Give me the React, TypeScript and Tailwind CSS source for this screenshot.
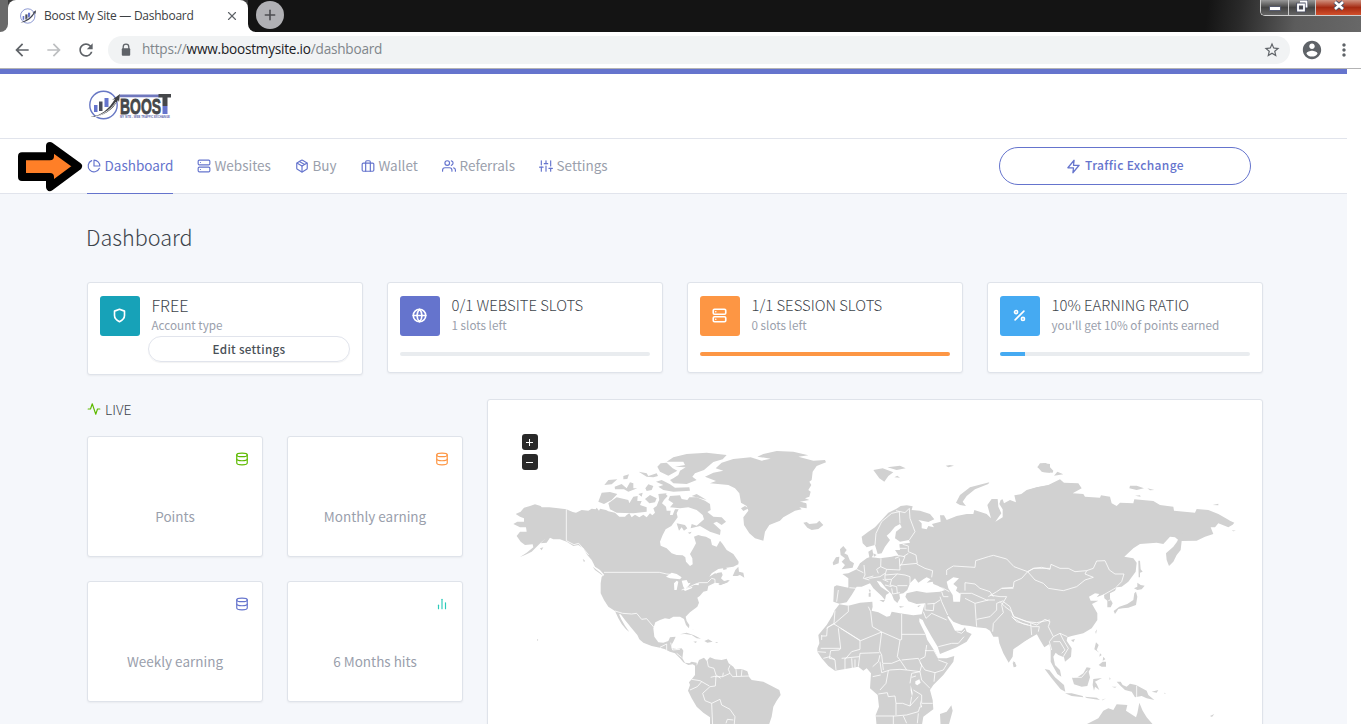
import React from "react";
import {
  FiPieChart, FiServer, FiPackage, FiBriefcase, FiUsers, FiSliders, FiZap, FiShield,
  FiGlobe, FiPercent, FiActivity, FiDatabase, FiBarChart2, FiX, FiPlus,
} from "react-icons/fi";
import { MdArrowBack, MdArrowForward, MdRefresh, MdStarBorder, MdMoreVert } from "react-icons/md";

const sans = "font-['Noto_Sans_CJK_SC',sans-serif]";
const chromeFont = "font-['Open_Sans',sans-serif]";

function Emblem({ className }: { className: string }) {
  return (
    <svg className={className} viewBox="0 0 30 30" fill="none">
      <circle cx="14.5" cy="15" r="13.5" stroke="#6878c4" strokeWidth="1.4" />
      <path d="M5 15h3v8H5zM15 9h4v9h-4z" fill="#6574cd" />
      <path d="M10 12h4v10h-4z" fill="#4a4d5c" />
      <path d="M1 27C14 23 20 17 26 8l-3 1 7-5-1 8-1-3C22 20 13 27 1 27z" fill="#3f4350" />
      <path d="M4 23C14 22 20 16 24 10" stroke="#fff" strokeWidth="0.8" />
    </svg>
  );
}

function BrowserChrome() {
  return (
    <div className={`${chromeFont} shrink-0`}>
      <div className="flex h-8 bg-white">
        <div className="h-8 w-2 rounded-br-lg bg-[#6a6a6a]" />
        <div className="flex w-60 bg-[#3a3a3a]">
          <div className="flex h-8 w-60 items-center rounded-t-lg bg-white pl-3 pr-[9px] text-[12px] text-[#3c4043]">
            <Emblem className="h-4 w-4" />
            <span className="ml-2 whitespace-nowrap pb-px tracking-[-0.26px]">Boost My Site — Dashboard</span>
            <FiX className="ml-auto h-3.5 w-3.5 text-[#5f6368]" />
          </div>
        </div>
        <div className="flex flex-1 rounded-bl-lg bg-[linear-gradient(97deg,#141414_86%,#2a2a2a_89%,#5c5c5c_94%,#686868_100%)]">
          <div className="ml-2 mt-px flex h-7 w-7 items-center justify-center rounded-full bg-[#b0b0b4]">
            <FiPlus className="h-4 w-4 text-[#4c4c50]" strokeWidth={2.4} />
          </div>
          <div className="ml-auto flex h-4 overflow-hidden rounded-bl-[5px] border-b border-l border-[#d0d0d0]">
            <div className="flex w-7 items-end justify-center border-r border-[#c8c8c8] bg-[linear-gradient(#999,#444_50%,#666)] pb-1">
              <div className="h-[5px] w-3 border border-[#555a6e] bg-white" />
            </div>
            <div className="flex w-[27px] justify-center border-r border-[#c8c8c8] bg-[linear-gradient(#999,#444_50%,#666)]">
              <svg width="12" height="13" viewBox="0 0 12 13" fill="none">
                <path d="M4 1.5h6.5v6M2 4.5h6v6H2z" stroke="#4b4f65" strokeWidth="3.5" />
                <path d="M4 1.5h6.5v6M2 4.5h6v6H2z" stroke="#fff" strokeWidth="1.8" />
              </svg>
            </div>
            <div className="flex w-[45px] justify-center bg-[linear-gradient(#d0917f,#a52a12_50%,#d2502c)]">
              <svg width="12" height="12" viewBox="0 0 12 12" fill="none">
                <path d="M2 2l8 7M10 2l-8 7" stroke="#4b4f65" strokeWidth="4.5" />
                <path d="M2 2l8 7M10 2l-8 7" stroke="#fff" strokeWidth="2.6" />
              </svg>
            </div>
          </div>
        </div>
      </div>
      <div className="flex h-[37px] items-center border-b border-[#b3b3b4] bg-white pl-3">
        <MdArrowBack className="h-5 w-5 text-[#5f6368]" />
        <MdArrowForward className="ml-3 h-5 w-5 text-[#bdbfc1]" />
        <MdRefresh className="ml-3 h-5 w-5 text-[#5f6368]" />
        <div className="ml-3 flex h-7 w-[1182px] items-center rounded-full bg-[#f1f3f4] pl-2.5 pr-[9px]">
          <svg className="h-4 w-4" viewBox="0 0 16 16">
            <path d="M5.2 7V5a2.8 2.8 0 0 1 5.6 0v2" fill="none" stroke="#5f6368" strokeWidth="1.3" />
            <path d="M4.8 6.3h6.4a1 1 0 0 1 1 1v5.4a1 1 0 0 1-1 1H4.8a1 1 0 0 1-1-1V7.3a1 1 0 0 1 1-1z" fill="#5f6368" />
          </svg>
          <span className="ml-2 pb-px text-[13.6px] tracking-[-0.22px] text-[#80868b]">
            https://<span className="text-[#202124]">www.boostmysite.io</span>/dashboard
          </span>
          <MdStarBorder className="ml-auto h-[18px] w-[18px] text-[#5f6368]" />
        </div>
        <svg className="ml-[11px] h-[22px] w-[22px]" viewBox="0 0 24 24" fill="#5f6368">
          <path d="M12 2C6.48 2 2 6.48 2 12s4.48 10 10 10 10-4.48 10-10S17.52 2 12 2zm0 3c1.66 0 3 1.34 3 3s-1.34 3-3 3-3-1.34-3-3 1.34-3 3-3zm0 14.2c-2.5 0-4.71-1.28-6-3.22.03-1.99 4-3.08 6-3.08 1.99 0 5.97 1.09 6 3.08-1.29 1.94-3.5 3.22-6 3.22z" />
        </svg>
        <MdMoreVert className="ml-[11px] h-5 w-5 text-[#5f6368]" />
      </div>
    </div>
  );
}

function Logo() {
  return (
    <svg className="block overflow-visible" width="100" height="36" viewBox="0 0 100 36">
      <circle cx="14.5" cy="15" r="13.7" stroke="#6878c4" strokeWidth="1.4" fill="none" />
      <path d="M5 15h3.5v7H5zM15.5 8h4v9h-4z" fill="#6574cd" />
      <path d="M10 11.5h3.5V21H10z" fill="#4a4d5c" />
      <path d="M31 4.5h39v2.8H31z" fill="#7078bd" />
      <path d="M1 27C12 26 20 19 26 9l-3 1 8-6-1 8-1-2C24 20 14 27 1 27z" fill="#3f4146" />
      <path d="M6 27C16 24 23 18 27 12" stroke="#fff" strokeWidth=".8" fill="none" />
      <text x="31" y="24" textLength="41" lengthAdjust="spacingAndGlyphs" className="fill-[#45474a] font-['Liberation_Sans',sans-serif] text-[22px] font-bold" stroke="#45474a" strokeWidth=".8">BOOS</text>
      <path d="M69.5 4H82v3.6h-3.5V16h-5V7.600h-4z" fill="#45474a" />
      <path d="M73.500 16h5v8h-5z" fill="#6574cd" />
      <text x="31" y="28" textLength="50" lengthAdjust="spacingAndGlyphs" className="fill-[#5f6aae] font-['Liberation_Sans',sans-serif] text-[3.8px] font-bold">MY SITE - WEB TRAFFIC EXCHANGE</text>
    </svg>
  );
}

const nav = [
  { label: "Dashboard", icon: FiPieChart, box: "w-[86px]", active: true },
  { label: "Websites", icon: FiServer, box: "w-[74px]", active: false },
  { label: "Buy", icon: FiPackage, box: "w-[42px]", active: false },
  { label: "Wallet", icon: FiBriefcase, box: "w-[57px]", active: false },
  { label: "Referrals", icon: FiUsers, box: "w-[73px]", active: false },
  { label: "Settings", icon: FiSliders, box: "w-[70px]", active: false },
];

function NavBar() {
  return (
    <nav className="flex h-[55px] border-b border-[#e1e4ec] bg-white pl-[87px] pr-24">
      <div className="flex gap-6">
        {nav.map(({ label, icon: Icon, box, active }) => (
          <div
            key={label}
            className={`flex ${box} h-[55px] items-center gap-[3.5px] whitespace-nowrap border-b text-[13.5px] ${active ? "border-[#6574cd] text-[#6574cd]" : "border-transparent text-[#9aa0ac]"}`}
          >
            <Icon className="h-3.5 w-3.5 shrink-0 text-[#6574cd]" />
            <span className="pb-0.5 leading-5">{label}</span>
          </div>
        ))}
      </div>
      <div className="ml-auto mt-2 flex h-[38px] w-[252px] items-center justify-center gap-1 rounded-full border border-[#6574cd] text-[12px] font-medium tracking-[0.35px] text-[#6574cd]">
        <FiZap className="h-[15px] w-[15px]" />
        <span className="pb-0.5 leading-5">Traffic Exchange</span>
      </div>
    </nav>
  );
}

const card = "rounded-[3px] border border-[#dfe3ea] bg-white shadow-[0_1px_2px_0_rgba(0,0,0,0.05)]";

const stats = [
  { title: "FREE", sub: "Account type", icon: FiShield, tone: "bg-[#17a2b8]", size: "text-[16.2px]", bar: null, fill: 0 },
  { title: "0/1 WEBSITE SLOTS", sub: "1 slots left", icon: FiGlobe, tone: "bg-[#6574cd]", size: "text-[14.85px]", bar: "bg-[#6574cd]", fill: 0 },
  { title: "1/1 SESSION SLOTS", sub: "0 slots left", icon: FiServer, tone: "bg-[#fd9644]", size: "text-[14.85px]", bar: "bg-[#fd9644]", fill: 100 },
  { title: "10% EARNING RATIO", sub: "you'll get 10% of points earned", icon: FiPercent, tone: "bg-[#45aaf2]", size: "text-[14.85px]", bar: "bg-[#45aaf2]", fill: 10 },
];

function StatCards() {
  return (
    <div className="grid h-[93px] grid-cols-4 items-start gap-6">
      {stats.map(({ title, sub, icon: Icon, tone, size, bar, fill }) => (
        <div key={title} className={`${card} px-3 pt-[13px] ${bar ? "h-[91px]" : "h-[93px]"}`}>
          <div className="flex h-10">
            <div className={`flex h-10 w-10 shrink-0 items-center justify-center rounded-[3px] pb-0.5 pr-px ${tone}`}>
              <Icon className="h-[15px] w-[15px] text-white" strokeWidth={2.6} />
            </div>
            <div className="-mt-px ml-[11.5px] whitespace-nowrap">
              <div className={`h-5 font-light leading-5 text-[#3d444b] ${size}`}>{title}</div>
              <div className="h-5 text-[11.7px] leading-5 text-[#9aa0ac]">{sub}</div>
            </div>
          </div>
          {bar ? (
            <div className="mt-4 h-1 overflow-hidden rounded-[3px] bg-[#e9ecef]">
              <div className={`h-full ${bar}`} style={{ width: `${fill}%` }} />
            </div>
          ) : (
            <div className="ml-12 flex h-[26px] w-[202px] items-center justify-center rounded-full border border-[#e1e4ec] pb-px text-[11.7px] font-medium leading-5 tracking-[0.3px] text-[#495057] shadow-[0_1px_1px_rgba(0,0,0,0.05)]">
              Edit settings
            </div>
          )}
        </div>
      ))}
    </div>
  );
}

const live = [
  { label: "Points", icon: FiDatabase, tone: "text-[#5eba00]" },
  { label: "Monthly earning", icon: FiDatabase, tone: "text-[#fd9644]" },
  { label: "Weekly earning", icon: FiDatabase, tone: "text-[#6574cd]" },
  { label: "6 Months hits", icon: FiBarChart2, tone: "text-[#2bcbba]" },
];

function LivePanel() {
  return (
    <section className="w-[376px]">
      <div className="flex h-[22px] items-center gap-1 pb-0.5 text-[13.8px] font-light text-[#3d444b]">
        <FiActivity className="h-3.5 w-3.5 text-[#5eba00]" />
        <span className="leading-5">LIVE</span>
      </div>
      <div className="mt-[15px] grid grid-cols-2 gap-6">
        {live.map(({ label, icon: Icon, tone }) => (
          <div key={label} className={`${card} flex h-[121px] flex-col items-center px-[13px] pt-[15px]`}>
            <Icon className={`h-3.5 w-3.5 self-end ${tone}`} />
            <div className="mt-10 text-[13.5px] leading-5 text-[#9aa0ac]">{label}</div>
          </div>
        ))}
      </div>
    </section>
  );
}

/* Land outlines, one list for each section of the map. */
const northAmerica = [
  "M47 282 62 275 72 263 90 258 105 253 122 258 125 262 148 262 175 265 199 268 218 276 228 278 245 270 265 272 275 266 287 268 290 263 297 272 300 266 318 270 325 274 345 278 358 290 375 290 380 285 388 280 395 292 405 284 418 292 430 284 440 292 450 280 457 286 465 278 460 265 470 258 475 245 482 232 497 222 503 228 492 240 486 250 498 260 500 272 512 272 510 285 518 285 525 268 536 268 530 280 533 292 525 303 514 318 497 328 488 345 480 365 482 377 500 385 515 400 530 405 548 406 556 412 558 425 570 438 578 433 577 415 570 402 580 385 588 370 582 350 595 345 605 348 618 350 632 358 636 375 650 380 660 362 668 372 680 390 700 402 716 425 715 433 700 440 680 443 655 447 635 460 628 470 645 460 665 457 668 465 663 475 672 483 690 480 680 488 660 495 658 490 645 488 625 498 622 512 610 515 600 527 592 533 597 548 592 560 570 577 557 590 560 603 568 615 567 625 558 615 552 597 540 590 520 590 508 597 495 595 480 600 466 607 460 625 463 650 475 667 490 668 505 663 510 652 527 650 520 665 516 672 515 685 530 687 545 685 550 692 547 715 555 728 568 730 575 725 590 728 590 740 578 733 565 735 550 727 540 715 525 700 510 695 495 688 480 683 455 678 430 668 418 658 412 645 395 625 375 600 362 583 357 583 365 600 375 617 388 636 378 628 365 612 355 595 345 573 325 560 312 540 302 520 302 490 305 470 313 465 300 450 285 440 280 430 275 420 262 405 250 385 235 375 220 378 200 365 180 358 160 358 150 353 140 368 122 370 137 355 122 368 110 380 95 395 75 405 60 411 80 398 100 382 98 373 75 375 62 365 50 348 60 335 80 335 78 322 60 322 40 312 52 305 72 305 72 295 60 290z",
  "M500 125 520 112 560 102 620 98 680 105 668 118 640 126 612 150 585 160 577 170 590 180 560 192 520 190 510 180 520 175 535 165 540 152 557 142 525 140 555 135 550 125z",
  "M472 140 482 130 500 128 518 145 532 152 505 167 480 155z",
  "M510 228 540 226 545 237 562 240 568 232 590 232 615 242 630 252 632 270 622 276 640 290 665 292 678 305 665 315 650 305 640 310 662 330 660 345 630 335 600 318 572 325 575 312 590 317 612 298 608 285 590 270 565 262 540 265 510 262 520 250 505 240z",
  "M590 222 620 240 575 228zM325 250 350 232 385 240 388 250 400 230 413 228 412 243 425 243 420 255 440 262 440 275 400 280 350 278 330 268z",
  "M295 245 305 218 330 216 352 222 335 240 312 252zM313 195 325 180 352 178 335 193zM370 168 387 163 382 177 370 178zM344 200 365 192 380 205 390 187 400 190 400 205 412 205 385 215 372 208 345 208z",
  "M416 155 440 160 445 168 470 160 474 168 460 172 440 170zM436 205 445 193 460 198 455 210 440 213zM468 185 485 180 510 193 525 203 568 202 570 212 520 215 490 210 475 200 490 195zM435 237 450 225 470 235 465 247 448 250zM475 222 500 220 490 235 478 240zM415 222 428 218 425 230zM530 310 555 315 562 325 552 332 545 322 537 332zM563 338 575 335 570 342z",
  "M698 468 706 450 715 440 717 455 730 458 733 473 720 465 712 468zM668 435 682 447 670 450zM655 492 685 480 685 486 660 496zM248 416 255 422 252 427zM278 440 303 460 310 468 285 450zM112 656 115 660 111 663zM120 385 130 382 125 391z",
  "M540 643 560 638 582 646 603 656 590 655 575 645 555 642zM580 665 590 664 588 669zM613 663 625 658 638 665 622 668zM645 666 655 667 650 669zM575 626 585 630 578 628z",
];
const southAmericaGreenland = [
  "M45 700 50 708 57 690 72 683 80 692 90 682 105 688 125 690 140 686 146 700 160 710 165 718 185 717 202 724 208 742 215 750 250 755 275 768 298 780 302 795 290 812 280 830 275 860 265 890 90 890 90 862 70 848 50 830 35 805 24 782 30 765 27 757 35 748 45 735z",
  "M75 140 100 128 130 122 107 115 125 98 160 87 212 82 245 92 272 86 232 80 250 72 290 63 340 65 385 76 355 80 400 92 435 90 438 97 410 108 398 125 395 150 388 155 394 165 385 180 392 185 388 200 375 205 388 210 360 215 380 223 380 235 358 232 365 238 345 242 310 262 300 272 268 285 255 305 250 332 225 325 208 310 192 285 190 262 205 242 200 228 183 218 178 190 165 175 145 165 90 160 108 153z",
  "M183 235 195 228 206 235 190 243zM360 215 380 220 370 230zM370 278 380 276 388 282 410 280 418 272 430 285 415 297 395 300 382 293z",
  "M580 120 608 115 640 127 625 138 613 155 598 145zM622 112 660 107 677 115 650 120zM643 142 652 137 660 143z",
];
const eurasiaAfrica = [
  "M155 290 175 275 195 262 215 240 235 218 258 207 272 198 290 196 308 199 305 210 330 212 360 222 373 238 355 246 325 240 335 250 335 265 350 268 355 258 372 262 366 252 392 245 390 226 402 226 410 240 440 228 470 222 490 222 493 210 530 222 543 235 532 195 545 177 563 177 565 200 574 220 556 245 578 232 578 208 568 192 572 180 578 178 582 190 600 180 618 187 613 166 650 160 655 150 682 142 720 135 720 560 650 600 610 628 608 650 596 668 580 640 568 610 565 590 550 590 540 572 528 565 500 562 480 558 455 555 430 545 415 528 412 530 425 552 435 572 455 572 465 562 470 575 485 582 470 605 440 622 390 642 383 620 365 590 345 555 338 540 328 535 328 545 345 580 352 600 362 615 375 635 385 655 410 655 433 648 430 665 400 705 370 735 360 750 368 780 370 808 340 830 335 860 200 860 197 825 207 800 203 765 180 745 183 700 170 685 160 692 145 680 110 686 75 692 55 678 35 655 22 635 22 625 28 610 25 585 50 555 68 525 73 512 88 493 115 497 150 488 187 485 188 500 185 512 205 517 230 530 240 528 245 515 270 520 310 526 335 523 340 505 345 490 320 492 295 484 286 470 290 460 320 453 350 458 390 455 405 450 385 438 370 432 368 425 350 428 362 418 350 412 340 418 325 428 315 415 300 430 292 450 280 460 268 462 270 475 262 489 252 480 245 462 228 445 212 425 200 422 212 440 238 458 228 465 225 480 215 468 190 445 180 430 155 440 140 440 125 465 110 487 88 491 70 485 72 440 80 436 115 443 115 415 97 402 115 400 140 388 150 370 170 355 178 352 175 335 187 328 190 345 185 352 210 355 245 350 265 345 255 330 270 330 268 313 300 308 297 300 270 305 255 295 258 275 275 262 270 252 255 260 240 278 230 287 240 300 225 320 215 340 203 342 195 315 170 322 158 310z",
  "M90 328 100 318 110 330 103 340 113 345 120 362 132 370 128 383 95 388 105 375 95 365 105 355 92 345zM68 368 78 352 88 350 86 370 70 376zM190 340 200 345 192 350zM176 448 182 450 180 460zM176 460 182 458 182 470 176 470zM208 480 225 480 220 487zM268 498 283 500 270 503zM322 498 333 495 325 502z",
  "M438 188 450 165 480 142 538 127 535 132 495 148 470 168 458 185 468 198 450 195zM407 77 420 75 432 77 415 82zM610 662 620 678 612 682zM390 822 410 815 424 796 428 812 415 860 392 860zM683 80 700 70 720 72 720 98 695 95z",
];
const eastAsia = [
  "M60 165 80 150 110 142 145 135 180 118 192 128 235 130 245 145 218 160 250 162 255 170 300 173 303 166 330 170 335 190 350 198 360 188 400 190 403 178 460 183 480 195 520 200 522 212 585 218 590 207 625 210 655 222 680 236 690 242 703 248 698 254 685 262 655 250 645 262 632 262 640 282 615 290 590 302 545 303 542 330 530 345 520 365 507 378 500 360 498 340 520 320 535 300 525 292 510 290 490 312 470 308 420 312 400 325 373 350 400 355 410 368 407 395 385 425 365 440 350 442 345 452 330 460 330 475 338 490 332 502 322 502 322 482 313 475 312 463 290 472 298 462 285 460 267 470 272 482 295 482 276 492 292 520 292 540 275 565 250 580 215 588 202 592 200 602 215 625 213 650 195 665 192 652 175 645 167 638 160 650 165 675 180 690 184 710 172 702 160 680 152 665 152 630 148 612 133 622 120 600 108 578 95 588 80 600 60 608z",
  "M550 280 552 285 543 300 530 305zM112 82 120 70 138 69 160 92 158 98 130 97zM162 107 172 95 190 103zM388 145 390 137 410 137 432 145 410 150zM442 145 463 150 450 151zM405 167 420 166 422 170zM638 195 655 191 655 196zM695 271 708 272 700 274z",
  "M415 362 420 362 422 388 428 395 420 398 420 412 416 412zM402 445 412 440 412 428 422 435 434 437 425 448 412 450zM408 455 412 470 408 495 385 503 368 505 355 507 345 522 341 513 358 500 382 492 400 480 403 460zM213 600 225 597 220 607zM286 575 291 568 288 582zM283 628 288 607 296 615 290 630 298 638z",
  "M134 687 148 690 165 712 192 735 196 755 182 748 155 715zM195 760 215 760 248 768 250 772 215 768zM254 770 290 773 300 780 260 774zM216 713 232 712 250 700 260 682 272 684 266 695 270 712 262 738 245 740 222 733zM280 717 306 714 285 725 290 732 298 750 285 740 282 752 278 735zM296 675 308 665 318 665 318 680 305 680zM300 640 305 645 298 650zM310 650 316 658 308 662z",
  "M350 725 362 725 368 735 380 740 390 731 408 735 440 752 445 765 463 780 440 775 425 768 405 772 395 755 375 750 362 738zM455 755 475 750 470 758zM305 780 318 775 308 781zM335 740 350 740 345 743zM328 712 332 716 329 720zM492 758 498 760 494 761zM630 828 643 822 636 831zM38 668 45 665 48 680 41 682z",
  "M255 855 295 835 310 812 325 805 340 810 350 793 382 795 378 812 408 832 412 820 418 788 428 812 440 832 460 855z",
];
const lakes = {
  na: "M498 470 515 458 530 462 545 472 540 478 510 475zM522 490 530 482 535 485 530 510 523 510zM545 482 560 480 565 490 572 488 565 498 555 508 550 500zM550 508 578 500 575 505 555 513zM580 493 598 490 595 496zM645 455 660 450 648 462zM565 275 575 280 565 290 555 278zM583 280 590 278 588 285z",
  eu: "M410 425 430 412 447 415 430 432 442 442 438 452 452 462 450 485 430 485 428 465 415 445zM316 724 328 718 332 728 322 736 316 732zM302 735 308 760 306 770 302 750zM330 780 336 800 332 804z",
};
const borders = {
  na: "M199 268V362L222 374 236 370 252 388 266 405M312 457H478L500 462 530 465M545 510 570 500 580 495 598 488H622L635 475 645 478 645 490M345 573 368 580 395 582 410 580 425 598 440 596 462 622M480 682 500 672 500 690M512 668 518 690 540 688M530 700 545 712",
  sa: "M80 684 85 710 102 715 108 735 122 745M105 740 128 740M150 706 145 718 150 730 128 740 130 728M150 730 158 740 208 738M168 718 170 738M186 718 184 738M92 742 108 738 106 768 90 770M35 748 60 752 88 768M30 780 52 770 65 755M90 770 68 790 75 812 95 820M95 820 120 808 125 825 150 838 165 860 162 890M95 820 98 890M138 880 142 868 160 870",
  africa: "M75 512 72 550 50 565M35 588 50 588 52 562 72 552M72 552 152 602 215 576 187 560 182 515 175 500M115 497 115 515 72 552M85 565 92 625 32 625M92 565 150 602 150 628 125 635 105 658M35 585 35 600M275 522V598L270 600 215 576M275 583H345M270 600 262 650 270 660 245 670 218 670 215 645 208 632 215 576M150 640 208 638M150 640 145 680M95 655 148 650M92 625 88 630 62 632 58 655 75 658M22 635 48 637M40 655 60 650 75 660 78 690M105 655 105 688M125 655 127 685M135 658 135 682M210 645 205 665 188 680M210 665 215 698 240 690 270 688 290 690M188 710 212 705M218 672 220 690M270 660 290 690 330 695 335 675 325 655 275 660M350 615 345 650 330 658M345 632 372 632 385 655M330 668 345 690 375 698 400 690 412 670 385 660M375 698 372 725M330 695 335 720 360 745M330 695 305 700 300 730M305 712 318 708M235 692 228 730 210 750M205 762 232 758 235 770 255 768 258 790 278 790 300 798 305 770M258 790 258 825M197 828 255 828 290 825M300 798 325 770M310 750 335 765 335 790 368 790M290 825 325 815 330 800M250 828V860M280 828 290 850M325 820 322 850",
  europe: "M195 315 198 280 215 245 245 220 268 215 270 250M258 212 285 218 298 205 300 235 315 275 298 300M255 345 285 350 275 372 270 378M268 350 255 355M258 325 290 325M278 313 295 318 295 335 318 345 322 370 270 375M295 340 280 350M213 355 212 380 230 388 270 390 268 355M212 380 200 388 205 400M162 375 165 405 160 415 178 420M118 443 140 445M140 388 160 398M85 450 80 485M178 415 210 410 225 400M165 415 190 408M230 388 225 405 262 402M225 405 225 418 245 418 262 402 285 405 300 410 300 432M320 372 345 385 368 392 365 412M245 418 240 435 260 440 262 460M262 437 292 437M245 445 248 462 270 458M218 418 235 425M225 435 245 440M352 492 375 490 390 480M345 490 345 510 370 512 372 490M340 515 348 535 365 520 410 540M390 470 395 485 413 525M395 455 400 470 415 470M370 440 400 445 418 455M385 620 425 610 445 610 462 590M440 575 455 580 465 570",
  asia: "M410 405 410 390 430 378 495 382 497 362 535 350 550 346 590 357 612 380 653 395 672 385 720 385M653 395 635 415 612 425 610 442 575 445 560 455 535 470M465 452V428L495 432 510 445 540 455 550 470M450 460 485 460 530 480 555 480M465 475 495 490 535 480M495 490 498 535 500 560M500 538 540 530 560 510 560 490 580 482M548 575 550 550 580 518 575 495M575 495 590 470 570 470 540 465M575 445 610 445M580 485 600 500 610 530 650 545 680 548 720 540M610 535 640 552 665 558",
  east: "M83 395 100 385 125 382 150 388 153 373 180 385 205 385 225 395 260 392 280 385 290 363 315 362 328 390 345 402 372 402 365 425 350 440M83 395 105 420 130 430 145 445 190 452 230 440 255 420 280 412 255 402 260 392M0 485 15 500 35 515 42 530 90 548 110 555 135 538 150 545 145 560 160 590 180 580 202 590M92 550 95 585M115 575 118 560 95 560M160 590 148 605 155 630M160 605 180 605 195 630 185 640M180 580 190 600 205 625 190 650M310 465 350 442M325 482 335 478M410 737V772M218 712 245 712 262 692M35 530 50 545 85 555",
};

function Shapes({ paths }: { paths: string[] }) {
  return <>{paths.map((d, i) => <path key={i} d={d} />)}</>;
}

function WorldMap() {
  const line = { fill: "none", stroke: "#fff", strokeWidth: 2.4, strokeLinejoin: "round" as const };
  return (
    <svg className="block shrink-0" width="748" height="304" viewBox="500 420 748 304" fill="#d1d1d1">
      <g transform="translate(500 420) scale(.33333)">
        <Shapes paths={northAmerica} />
        <path d={lakes.na} fill="#fff" />
        <path d={borders.na} {...line} />
      </g>
      <g transform="translate(680 430) scale(.33333)">
        <Shapes paths={southAmericaGreenland} />
        <path d={borders.sa} {...line} />
      </g>
      <g transform="translate(810 440) scale(.33333)"><Shapes paths={eurasiaAfrica} /></g>
      <g transform="translate(1000 440) scale(.33333)"><Shapes paths={eastAsia} /></g>
      <g transform="translate(810 440) scale(.33333)">
        <path d={lakes.eu} fill="#fff" />
        <path d={borders.africa} {...line} />
        <path d={borders.europe} {...line} />
        <path d={borders.asia} {...line} />
      </g>
      <g transform="translate(1000 440) scale(.33333)"><path d={borders.east} {...line} /></g>
    </svg>
  );
}

function MapPanel() {
  return (
    <section className={`${card} relative h-[340px] w-[776px] overflow-hidden pl-3 pt-5`}>
      <WorldMap />
      <div className="absolute left-[34px] top-[34px] flex flex-col gap-1">
        {["M4 8.5h7M7.5 5v7", "M4 8.5h7"].map((d) => (
          <div key={d} className="h-4 w-4 rounded-[3px] bg-[#292929]">
            <svg className="block" width="16" height="16" viewBox="0 0 16 16"><path d={d} stroke="#fff" /></svg>
          </div>
        ))}
      </div>
    </section>
  );
}

export default function App() {
  return (
    <div className="flex h-[724px] w-[1361px] flex-col overflow-hidden bg-white">
      <BrowserChrome />
      <div className={`${sans} relative h-[655px] w-[1347px] overflow-hidden bg-[#f5f7fb]`}>
        <header className="flex h-[70px] border-b border-t-[5px] border-b-[#e1e4ec] border-t-[#6574cd] bg-white pl-[89px] pt-4">
          <Logo />
        </header>
        <NavBar />
        <main className="w-[1263px] pl-[87px]">
          <h1 className="-ml-px pt-[27px] text-[21.6px] font-light leading-8 text-[#3d444b]">Dashboard</h1>
          <div className="mt-[29px]">
            <StatCards />
          </div>
          <div className="mt-6 flex gap-6">
            <LivePanel />
            <MapPanel />
          </div>
        </main>
        <svg className="absolute left-4 top-[72px]" width="68" height="52" viewBox="48 33 204 156">
          <path d="M66 79H150V48L234 109 150 171V141H66z" fill="#ff7f27" stroke="#000" strokeWidth="24" strokeLinejoin="round" />
        </svg>
      </div>
    </div>
  );
}
